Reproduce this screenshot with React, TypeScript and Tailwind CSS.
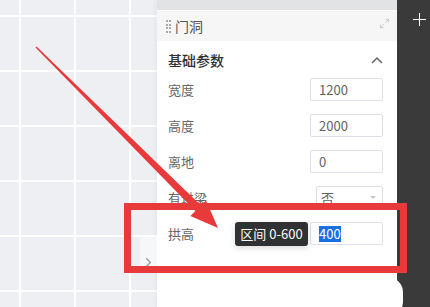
import { ChevronRight, Maximize2 } from "lucide-react";

const fields = [
  { label: "宽度", value: "1200" },
  { label: "高度", value: "2000" },
  { label: "离地", value: "0" },
];

export default function App() {
  return (
    <div className="relative flex h-[307px] w-[430px] overflow-hidden bg-[#edeff2] bg-[image:linear-gradient(to_right,#fff_1.5px,transparent_1.5px),linear-gradient(to_bottom,#fff_1.5px,transparent_1.5px)] bg-[size:55px_55px] bg-[position:19px_15px] font-['Noto_Sans_CJK_SC',sans-serif]">
      {/* canvas */}
      <div className="relative w-[157px] shrink-0">
        <button className="absolute left-[140px] top-[237px] flex h-[36px] w-[17px] items-center justify-center rounded-l-[3px] bg-[#f6f7f8] pt-[14px]">
          <ChevronRight size={15} strokeWidth={2.2} className="text-[#9a9a9a]" />
        </button>
      </div>

      {/* property panel */}
      <div className="flex w-[240px] shrink-0 flex-col shadow-[-2px_0_4px_rgba(0,0,0,0.04)]">
        <div className="h-[10px] bg-[#e1e3e5]" />
        <div className="flex h-[31px] items-start border-t border-[#fbfbfb] bg-[#f6f6f6] pl-[9px] pr-[7px]">
          <div className="mt-[9px] grid grid-cols-2 gap-x-[1px] gap-y-[1.5px]">
            {Array.from({ length: 8 }).map((_, i) => (
              <span key={i} className="h-[2px] w-[2px] bg-[#a8a8a8]" />
            ))}
          </div>
          <span className="ml-[4px] mt-[5px] text-[14px] leading-[20px] text-[#555]">门洞</span>
          <Maximize2 size={11} strokeWidth={1.6} className="ml-auto mt-[7px] text-[#bdbdbd]" />
        </div>

        <div className="flex flex-1 flex-col bg-white pl-[11px] pr-[14px]">
          <div className="flex h-[37px] items-center justify-between pt-[1px]">
            <span className="text-[14px] font-medium text-[#303133]">基础参数</span>
            <svg width="12" height="8" viewBox="0 0 12 8">
              <polyline points="1,7 6,2 11,7" fill="none" stroke="#666" strokeWidth="1.5" />
            </svg>
          </div>

          <div className="flex flex-col gap-[13px]">
            {fields.map((f) => (
              <div key={f.label} className="flex h-[23px] items-center justify-between">
                <span className="text-[13px] text-[#666]">{f.label}</span>
                <div className="flex h-[23px] w-[73px] items-center rounded-[2px] border border-[#dcdfe6] pl-[8px] text-[13px] text-[#606266]">
                  {f.value}
                </div>
              </div>
            ))}

            <div className="flex h-[23px] items-center justify-between">
              <span className="text-[13px] text-[#666]">有过梁</span>
              <div className="flex h-[23px] w-[67px] items-center justify-between rounded-[2px] border border-[#dcdfe6] pl-[4px] pr-[6px] text-[13px] text-[#606266]">
                否
                <span className="h-0 w-0 border-x-[3px] border-t-[3px] border-x-transparent border-t-[#c0c4cc]" />
              </div>
            </div>

            <div className="flex h-[23px] items-center justify-between">
              <span className="text-[13px] text-[#666]">拱高</span>
              <div className="relative flex h-[23px] w-[73px] items-center rounded-[2px] border border-[#dcdfe6] pl-[8px] text-[13px]">
                <span className="bg-[#1a6fe3] leading-[16px] text-white">400</span>
                <div className="absolute right-[calc(100%+3px)] top-[-1px] flex h-[24px] w-[73px] items-center justify-center rounded-[3px] bg-[#303133] text-[13px] whitespace-nowrap text-white shadow-[0_2px_6px_rgba(0,0,0,0.15)]">
                  区间 0-600
                </div>
              </div>
            </div>
          </div>
        </div>
      </div>

      {/* dark side bar */}
      <div className="w-[33px] shrink-0 bg-[#3a3a3a] pl-[16px] pt-[13px]">
        <svg width="13" height="13" viewBox="0 0 13 13">
          <line x1="6.5" y1="0" x2="6.5" y2="13" stroke="#fff" strokeWidth="1" />
          <line x1="0" y1="6.5" x2="13" y2="6.5" stroke="#fff" strokeWidth="1" />
        </svg>
      </div>

      {/* annotation overlays */}
      <div className="absolute left-[372px] top-[277px] h-[40px] w-[31px] rounded-full bg-white" />
      <div className="absolute left-[124px] top-[203px] h-[70px] w-[283px] border-[7px] border-[#e8393b]" />
      <svg className="pointer-events-none absolute left-0 top-0" width="430" height="307" viewBox="0 0 430 307">
        <polygon
          points="36.5,46.5 201,205.4 206,200.4 218,228 190.4,216 195.4,211 35.5,47.5"
          fill="#e8393b"
        />
      </svg>
    </div>
  );
}
